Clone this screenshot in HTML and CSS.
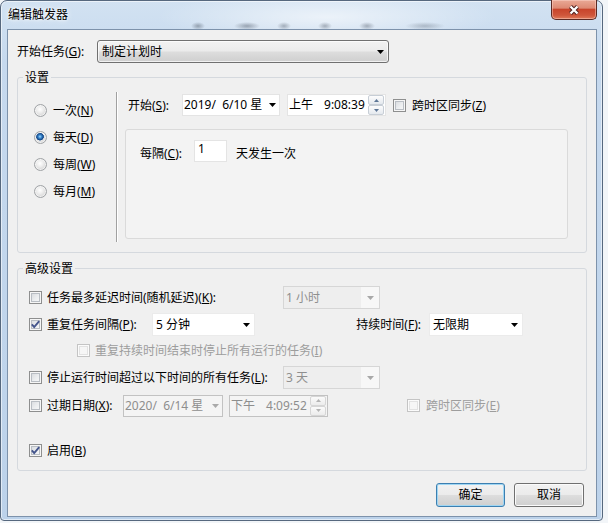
FILE: index.html
```html
<!DOCTYPE html>
<html lang="zh-CN">
<head>
<meta charset="utf-8">
<title>编辑触发器</title>
<link rel="stylesheet" href="styles.css">
</head>
<body>
<div class="window">
  <div class="titlebar">
    <span class="title">编辑触发器</span>
    <span class="close"><svg width="14" height="12" viewBox="0 0 14 12"><path d="M3.5 2.5 L10.5 9.5 M10.5 2.5 L3.5 9.5" stroke="#4a2020" stroke-width="4.2"/><path d="M3.5 2.5 L10.5 9.5 M10.5 2.5 L3.5 9.5" stroke="#ffffff" stroke-width="2.3"/></svg></span>
  </div>
  <div class="client">
    <div class="task-row">
      <span class="task-label">开始任务(<u>G</u>):</span>
      <div class="select"><span>制定计划时</span><svg class="dd" width="7" height="4" viewBox="0 0 7 4"><path d="M0 0H7L3.5 4Z"/></svg></div>
    </div>

    <fieldset class="group g1">
      <legend>设置</legend>
      <div class="g1-body">
        <div class="radios">
          <div class="radio"><span class="rb"></span><span>一次(<u>N</u>)</span></div>
          <div class="radio"><span class="rb on"></span><span>每天(<u>D</u>)</span></div>
          <div class="radio"><span class="rb"></span><span>每周(<u>W</u>)</span></div>
          <div class="radio"><span class="rb"></span><span>每月(<u>M</u>)</span></div>
        </div>
        <div class="sep"></div>
        <div class="sched">
          <div class="start-row">
            <span class="start-label">开始(<u>S</u>):</span>
            <div class="field date w98"><span class="ftext">2019/&nbsp;&nbsp;6/10 星</span><svg class="dd" width="7" height="4" viewBox="0 0 7 4"><path d="M0 0H7L3.5 4Z"/></svg></div>
            <div class="field time w99 ml7"><span class="ampm">上午</span><span class="clock">9:08:39</span><span class="spin"><span class="spin-btn"><svg width="5" height="3" viewBox="0 0 5 3"><path d="M0 3H5L2.5 0Z"/></svg></span><span class="spin-btn"><svg width="5" height="3" viewBox="0 0 5 3"><path d="M0 0H5L2.5 3Z"/></svg></span></span></div>
            <span class="cb ml7"></span><span class="cb-text">跨时区同步(<u>Z</u>)</span>
          </div>
          <div class="panel">
            <div class="every-row">
              <span class="every-label">每隔(<u>C</u>):</span>
              <div class="num">1</div>
              <span class="every-text">天发生一次</span>
            </div>
          </div>
        </div>
      </div>
    </fieldset>

    <fieldset class="group g2">
      <legend>高级设置</legend>
      <div class="g2-body">
        <div class="arow r1">
          <span class="cb"></span><span class="alab w-k">任务最多延迟时间(随机延迟)(<u>K</u>):</span>
          <div class="combo dis w97"><span>1 小时</span><span class="dd-area"><svg class="dd" width="7" height="4" viewBox="0 0 7 4"><path d="M0 0H7L3.5 4Z"/></svg></span></div>
        </div>
        <div class="arow r2">
          <span class="cb"><svg width="11" height="11" viewBox="0 0 11 11"><path d="M1.8 5.3 L4.2 8 L9.2 2.2" fill="none" stroke="#44558c" stroke-width="1.9"/></svg></span><span class="alab w-p">重复任务间隔(<u>P</u>):</span>
          <div class="combo white w103"><span>5 分钟</span><svg class="dd" width="7" height="4" viewBox="0 0 7 4"><path d="M0 0H7L3.5 4Z"/></svg></div>
          <span class="dur-label">持续时间(<u>F</u>):</span>
          <div class="combo white w94"><span>无限期</span><svg class="dd" width="7" height="4" viewBox="0 0 7 4"><path d="M0 0H7L3.5 4Z"/></svg></div>
        </div>
        <div class="arow r3">
          <span class="cb dis"></span><span class="alab muted">重复持续时间结束时停止所有运行的任务(<u>I</u>)</span>
        </div>
        <div class="arow r4">
          <span class="cb"></span><span class="alab w-k">停止运行时间超过以下时间的所有任务(<u>L</u>):</span>
          <div class="combo dis w97"><span>3 天</span><span class="dd-area"><svg class="dd" width="7" height="4" viewBox="0 0 7 4"><path d="M0 0H7L3.5 4Z"/></svg></span></div>
        </div>
        <div class="arow r5">
          <span class="cb"></span><span class="alab w-x">过期日期(<u>X</u>):</span>
          <div class="field date dis w100"><span class="ftext">2020/&nbsp;&nbsp;6/14 星</span><svg class="dd" width="7" height="4" viewBox="0 0 7 4"><path d="M0 0H7L3.5 4Z"/></svg></div>
          <div class="field time dis w99 ml6"><span class="ampm">下午</span><span class="clock">4:09:52</span><span class="spin"><span class="spin-btn"><svg width="5" height="3" viewBox="0 0 5 3"><path d="M0 3H5L2.5 0Z"/></svg></span><span class="spin-btn"><svg width="5" height="3" viewBox="0 0 5 3"><path d="M0 0H5L2.5 3Z"/></svg></span></span></div>
          <span class="cb dis tz2"></span><span class="muted tz2-text">跨时区同步(<u>E</u>)</span>
        </div>
        <div class="arow r6">
          <span class="cb"><svg width="11" height="11" viewBox="0 0 11 11"><path d="M1.8 5.3 L4.2 8 L9.2 2.2" fill="none" stroke="#44558c" stroke-width="1.9"/></svg></span><span class="alab">启用(<u>B</u>)</span>
        </div>
      </div>
    </fieldset>

    <div class="buttons">
      <button class="btn default">确定</button>
      <button class="btn w70">取消</button>
    </div>
  </div>
</div>
</body>
</html>
```

FILE: styles.css
```css
* { box-sizing: border-box; }
html, body { margin: 0; padding: 0; }
body {
  width: 608px;
  height: 523px;
  overflow: hidden;
  background: #f2f5f8;
  font-family: "Noto Sans", "Noto Sans CJK SC", sans-serif;
  font-size: 12px;
  line-height: 16px;
  color: #000;
}
u { text-underline-offset: 1px; }

.window {
  width: 603px;
  height: 521px;
  border: 1px solid #56687e;
  border-radius: 7px 7px 4px 4px;
  padding: 0 5px 3px 6px;
  display: flex;
  flex-direction: column;
  background: linear-gradient(180deg, #d2e2f2 0%, #c6d9ee 60px, #bcd2ea 100%);
  box-shadow: inset 0 0 0 1px rgba(255,255,255,0.55);
}

.titlebar {
  height: 28px;
  flex-shrink: 0;
  display: flex;
  justify-content: space-between;
  align-items: flex-start;
  background:
    radial-gradient(ellipse 7px 4px at 191px 25px, rgba(70,80,95,0.45), transparent),
    radial-gradient(ellipse 13px 4px at 240px 25px, rgba(70,80,95,0.45), transparent),
    radial-gradient(ellipse 7px 4px at 277px 25px, rgba(70,80,95,0.4), transparent),
    radial-gradient(ellipse 7px 4px at 318px 25px, rgba(70,80,95,0.4), transparent),
    radial-gradient(ellipse 8px 4px at 360px 25px, rgba(70,80,95,0.4), transparent),
    radial-gradient(ellipse 20px 4px at 418px 25px, rgba(70,80,95,0.3), transparent),
    radial-gradient(ellipse 170px 26px at 320px 16px, rgba(255,255,255,0.6), transparent);
}
.title {
  padding-left: 1px;
  line-height: 27px;
  color: #000;
  text-shadow: 0 0 6px #fff, 0 0 3px #fff;
}
.close {
  width: 46px;
  height: 20px;
  margin-top: -1px;
  border: 1px solid #5a2a24;
  border-top: none;
  border-radius: 0 0 5px 5px;
  background: linear-gradient(180deg, #e9a996 0%, #dd8a74 42%, #c8452c 50%, #cf563b 80%, #e07a5a 100%);
  box-shadow: inset 0 0 0 1px rgba(255,220,210,0.45);
  display: flex;
  align-items: center;
  justify-content: center;
}

.client {
  flex: 1;
  border: 1px solid #7d92ab;
  background: #f0f0f0;
  padding: 10px 9px 0 9px;
  display: flex;
  flex-direction: column;
}

.task-row {
  height: 23px;
  display: flex;
  align-items: center;
}
.task-label { width: 80px; }
.select {
  width: 292px;
  height: 23px;
  border: 1px solid #707070;
  border-radius: 3px;
  background: linear-gradient(180deg, #f2f2f2 0%, #ebebeb 48%, #dddddd 52%, #cfcfcf 100%);
  box-shadow: inset 0 0 0 1px rgba(255,255,255,0.7);
  padding: 0 4px 0 4px;
  display: flex;
  align-items: center;
  justify-content: space-between;
}
.dd { display: block; fill: #000; flex-shrink: 0; }

fieldset.group {
  margin: 0;
  padding: 0;
  border: 1px solid #d5d9de;
  border-radius: 3px;
  min-width: 0;
}
fieldset.group legend {
  margin-left: 5px;
  padding: 0 2px;
  line-height: 17px;
}
fieldset.g1 { margin-top: 6px; }
fieldset.g2 { margin-top: 7px; }

.g1-body {
  height: 166px;
  display: flex;
}
.radios {
  width: 98px;
  padding: 11px 0 0 16px;
  display: flex;
  flex-direction: column;
}
.radio {
  height: 27px;
  display: flex;
  align-items: center;
  gap: 6px;
}
.rb {
  width: 13px;
  height: 13px;
  border-radius: 50%;
  border: 1px solid #a0a3a6;
  background: radial-gradient(circle at 45% 40%, #ffffff 0%, #eeeeee 35%, #d4d4d4 75%, #c6c6c6 100%);
  box-shadow: inset 0 0 0 1px rgba(255,255,255,0.6);
  flex-shrink: 0;
}
.rb.on {
  background:
    radial-gradient(circle at 45% 42%, #a7dcff 0px, #3b8ad0 1.6px, #174a8a 3.2px, #2d5e98 3.7px, transparent 4.1px),
    radial-gradient(circle at 45% 40%, #ffffff 0%, #eeeeee 35%, #d4d4d4 75%, #c6c6c6 100%);
}
.sep {
  width: 2px;
  height: 150px;
  margin-top: 6px;
  border-left: 1px solid #a0a0a0;
  border-right: 1px solid #ffffff;
}
.sched {
  flex: 1;
  padding: 8px 0 0 7px;
}
.start-row {
  height: 22px;
  padding-left: 3px;
  display: flex;
  align-items: center;
}
.start-label { width: 54px; padding-top: 2px; }

.field {
  height: 22px;
  background: #fff;
  border: 1px solid #e4e4e4;
  display: flex;
  align-items: center;
  padding-left: 1px;
  white-space: nowrap;
  overflow: hidden;
}
.field.date .dd { margin-left: auto; margin-right: 3px; }
.field .ftext { overflow: hidden; }
.field.time { padding-left: 1px; }
.field .clock { margin-left: 11px; }
.spin {
  margin-left: auto;
  margin-right: 1px;
  width: 16px;
  height: 20px;
  display: flex;
  flex-direction: column;
}
.spin-btn {
  flex: 1;
  border: 1px solid #c7ced6;
  border-radius: 2px;
  background: linear-gradient(180deg, #fdfdfd, #e4e9ee);
  display: flex;
  align-items: center;
  justify-content: center;
}
.spin-btn svg { display: block; fill: #5d7696; }
.field.dis {
  background: #f4f4f4;
  border-color: #c2c2c2;
  color: #8e8e8e;
}
.field.dis .dd { fill: #a9a9a9; }
.field.dis .spin-btn { border-color: #d6d6d6; background: linear-gradient(180deg, #fbfbfb, #ececec); }
.field.dis .spin-btn svg { fill: #b4b4b4; }

.w98 { width: 98px; }
.w99 { width: 99px; }
.w100 { width: 100px; }
.w97 { width: 97px; }
.w103 { width: 103px; }
.w94 { width: 94px; }
.ml7 { margin-left: 7px; }
.ml6 { margin-left: 6px; }

.cb {
  width: 13px;
  height: 13px;
  flex-shrink: 0;
  border: 1px solid #8e8f8f;
  background: linear-gradient(135deg, #d3d6da 0%, #eceef0 55%, #fbfbfb 100%);
  box-shadow: inset 0 0 0 1px #f6f6f6, inset 0 0 0 2px #b9bec4;
  display: flex;
  align-items: center;
  justify-content: center;
}
.cb svg { display: block; }
.cb.dis {
  border-color: #c4c4c4;
  background: #f6f6f6;
  box-shadow: inset 0 0 0 1px #fbfbfb, inset 0 0 0 2px #e2e2e2;
}
.cb-text { margin-left: 6px; padding-top: 2px; }

.panel {
  margin-top: 13px;
  width: 443px;
  height: 110px;
  border: 1px solid #dadada;
  border-radius: 3px;
  background: #f3f3f3;
  padding: 10px 0 0 14px;
}
.every-row {
  display: flex;
  align-items: center;
  height: 22px;
}
.every-label { width: 54px; padding-top: 5px; }
.num {
  width: 33px;
  height: 22px;
  background: #fff;
  border: 1px solid #e4e4e4;
  padding-left: 3px;
  line-height: 16px;
}
.every-text { margin-left: 9px; padding-top: 5px; }

.g2-body {
  height: 193px;
  padding: 9px 0 0 11px;
}
.arow {
  display: flex;
  align-items: center;
}
.r1 { height: 23px; }
.r2 { height: 23px; margin-top: 4px; }
.r3 { height: 17px; margin-top: 6px; padding-left: 48px; }
.r4 { height: 23px; margin-top: 7px; }
.r5 { height: 23px; margin-top: 5px; }
.r6 { height: 17px; margin-top: 25px; }
.alab { margin-left: 5px; white-space: nowrap; }
.w-k { width: 236px; }
.w-p { width: 105px; }
.w-x { width: 76px; }
.muted { color: #9d9d9d; }
.dur-label { width: 174px; text-align: right; padding-right: 8px; }
.tz2 { margin-left: 79px; }
.tz2-text { margin-left: 6px; }

.combo {
  height: 23px;
  display: flex;
  align-items: center;
  justify-content: space-between;
  white-space: nowrap;
}
.combo.white {
  background: #fff;
  border: 1px solid #ebebeb;
  padding: 0 4px 0 3px;
}
.combo.dis {
  background: #eeeeee;
  border: 1px solid #d6d6d6;
  color: #8f8f8f;
  padding-left: 2px;
}
.dd-area {
  width: 18px;
  height: 100%;
  background: #f7f7f7;
  display: flex;
  align-items: center;
  justify-content: center;
}
.dd-area .dd { fill: #a8a8a8; }

.buttons {
  margin-top: 12px;
  padding-right: 3px;
  display: flex;
  justify-content: flex-end;
  gap: 9px;
}
.btn {
  width: 69px;
  height: 24px;
  padding: 0;
  font: inherit;
  color: #000;
  border: 1px solid #707070;
  border-radius: 3px;
  background: linear-gradient(180deg, #f2f2f2 0%, #ebebeb 48%, #dddddd 52%, #cfcfcf 100%);
  box-shadow: inset 0 0 0 1px #fbfbfb;
}
.btn.w70 { width: 70px; }
.btn.default {
  border-color: #3c7fb1;
  box-shadow: inset 0 0 0 1px #9fd6f3;
}
```
